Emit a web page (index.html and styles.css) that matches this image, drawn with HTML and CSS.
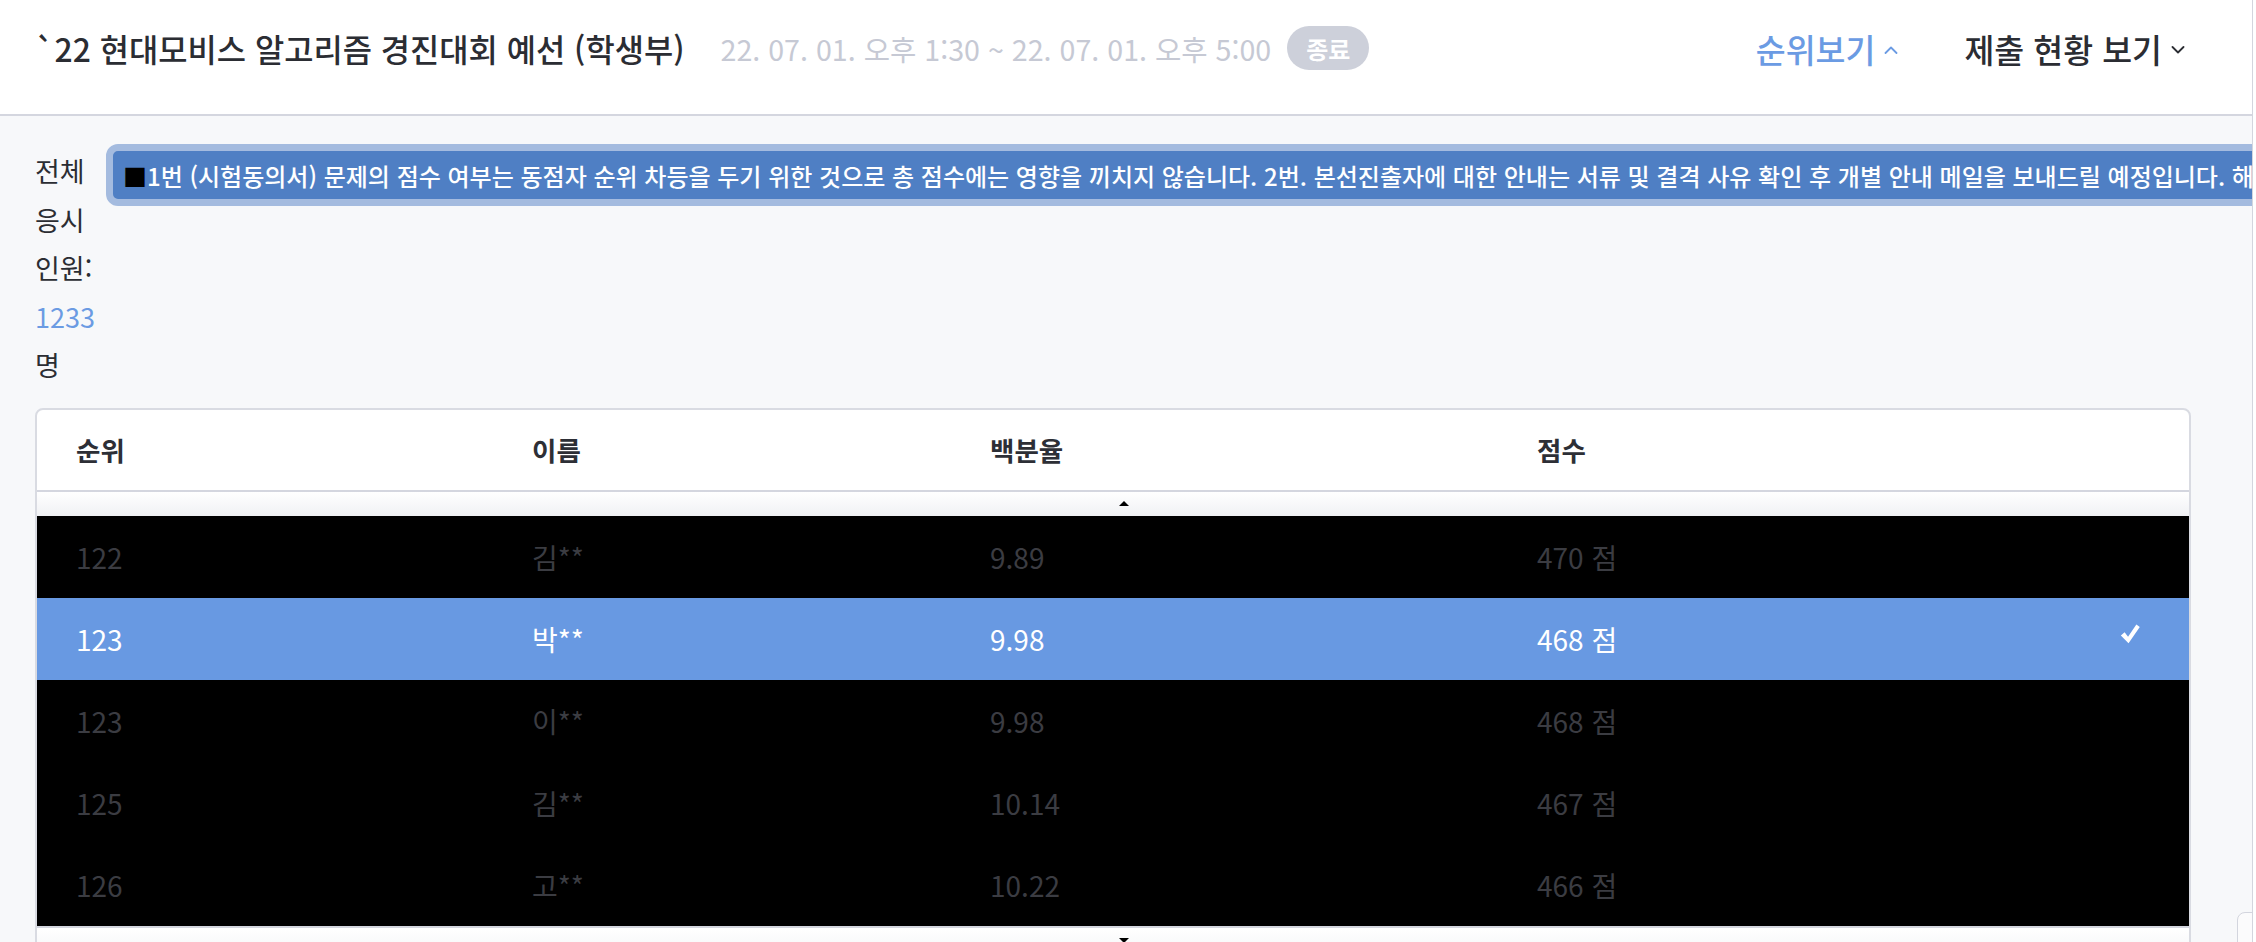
FILE: index.html
```html
<!DOCTYPE html>
<html lang="ko">
<head>
<meta charset="utf-8">
<title>순위보기</title>
<link rel="stylesheet" href="styles.css">
</head>
<body>
<div class="page">
  <header class="topbar">
    <div class="title-group">
      <h1 class="title">`22 현대모비스 알고리즘 경진대회 예선 (학생부)</h1>
      <span class="period">22. 07. 01. 오후 1:30 ~ 22. 07. 01. 오후 5:00</span>
      <span class="badge">종료</span>
    </div>
    <nav class="tabs">
      <a class="tab active" href="#">순위보기<svg class="chev" viewBox="0 0 14 8"><polyline points="1.5,7 7,1.5 12.5,7"/></svg></a>
      <a class="tab" href="#">제출 현황 보기<svg class="chev" viewBox="0 0 14 8"><polyline points="1.5,1 7,6.5 12.5,1"/></svg></a>
    </nav>
  </header>

  <main class="content">
    <div class="info-row">
      <p class="count">전체 응시 인원: <span class="num">1233</span> 명</p>
      <div class="notice"><span class="notice-text"><span class="sq">■</span>1번 (시험동의서) 문제의 점수 여부는 동점자 순위 차등을 두기 위한 것으로 총 점수에는 영향을 끼치지 않습니다. 2번. 본선진출자에 대한 안내는 서류 및 결격 사유 확인 후 개별 안내 메일을 보내드릴 예정입니다. 해당</span></div>
    </div>

    <section class="rank-card">
      <div class="rank-grid rank-head">
        <span>순위</span><span>이름</span><span>백분율</span><span>점수</span><span></span>
      </div>
      <div class="scroll-cue"><span class="tri-up"></span></div>
      <div class="rank-list">
        <div class="rank-grid rank-row"><span>122</span><span>김**</span><span>9.89</span><span>470 점</span><span></span></div>
        <div class="rank-grid rank-row selected"><span>123</span><span>박**</span><span>9.98</span><span>468 점</span><svg class="check" viewBox="0 0 18 18"><path d="M1.5 10.2 L4.6 7.6 L7.4 11.2 L14.2 1.2 L17 3.2 L7.8 16.6 Z"/></svg></div>
        <div class="rank-grid rank-row"><span>123</span><span>이**</span><span>9.98</span><span>468 점</span><span></span></div>
        <div class="rank-grid rank-row"><span>125</span><span>김**</span><span>10.14</span><span>467 점</span><span></span></div>
        <div class="rank-grid rank-row"><span>126</span><span>고**</span><span>10.22</span><span>466 점</span><span></span></div>
      </div>
      <div class="scroll-cue bottom"><span class="tri-down"></span></div>
    </section>
  </main>

  <div class="corner-widget"></div>
</div>
</body>
</html>
```

FILE: styles.css
```css
* { box-sizing: border-box; }

html, body {
  margin: 0;
  padding: 0;
  background: #ffffff;
}

body {
  font-family: "Noto Sans CJK KR", "Noto Sans", sans-serif;
  color: #2b2d33;
}

.page {
  position: relative;
  width: 2253px;
  height: 942px;
  background: #f7f8fa;
  border-right: 1px solid #d3d5de;
  overflow: hidden;
}

/* ---------- top bar ---------- */
.topbar {
  height: 116px;
  background: #ffffff;
  border-bottom: 2px solid #d4d6df;
  display: flex;
  justify-content: space-between;
  align-items: flex-start;
  padding: 23px 67px 0 35px;
}

.title-group {
  display: flex;
  align-items: center;
  height: 50px;
}

.title {
  margin: 0;
  font-size: 31.8px;
  font-weight: 500;
  line-height: 50px;
  color: #2b2d33;
  white-space: nowrap;
}

.period {
  margin-left: 36px;
  font-size: 28.6px;
  color: #c6c9d4;
  white-space: nowrap;
}

.badge {
  margin-left: 16px;
  height: 44px;
  padding: 0 19px;
  border-radius: 22px;
  background: #cdd0da;
  color: #ffffff;
  font-size: 24px;
  font-weight: 700;
  display: inline-flex;
  align-items: center;
}

.tabs {
  display: flex;
  align-items: center;
  gap: 66px;
  height: 50px;
}

.tab {
  display: flex;
  align-items: center;
  gap: 9px;
  font-size: 32.5px;
  font-weight: 500;
  color: #2b2d33;
  text-decoration: none;
  white-space: nowrap;
}

.tab.active { color: #6b9be3; }

.chev {
  width: 14px;
  height: 8px;
  fill: none;
  stroke: currentColor;
  stroke-width: 1.8;
  stroke-linecap: round;
  stroke-linejoin: round;
  margin-top: 4px;
}

/* ---------- content ---------- */
.content {
  padding: 28px 61px 0 35px;
}

.info-row {
  display: flex;
  align-items: flex-start;
  gap: 9px;
  margin-bottom: 18px;
}

.count {
  margin: 0;
  flex: none;
  width: 62px;
  padding-top: 3px;
  font-size: 27px;
  line-height: 48.5px;
  color: #2b2d33;
  word-break: keep-all;
}

.count .num { color: #6b9be3; }

.notice {
  flex: none;
  width: 2200px;
  height: 62px;
  border: 7px solid #a4bbdf;
  border-radius: 12px;
  background: #4f7fc4;
  display: flex;
  align-items: center;
  padding-left: 10px;
  overflow: hidden;
  white-space: nowrap;
}

.notice-text {
  font-size: 24px;
  font-weight: 500;
  color: #ffffff;
}

.notice-text .sq { color: #000000; }

/* ---------- ranking card ---------- */
.rank-card {
  background: #ffffff;
  border: 2px solid #d9dbe2;
  border-radius: 8px;
  overflow: hidden;
}

.rank-grid {
  display: grid;
  grid-template-columns: 456px 458px 547px 1fr auto;
  align-items: center;
  padding: 0 48px 0 39px;
}

.rank-head {
  height: 82px;
  font-size: 26.5px;
  font-weight: 600;
  color: #2d2f36;
  border-bottom: 2px solid #d4d6df;
}

.scroll-cue {
  height: 24px;
  display: flex;
  justify-content: center;
  align-items: center;
  padding-left: 22px;
  background: linear-gradient(#ffffff, #f0f1f4);
}

.scroll-cue.bottom {
  border-top: 2px solid #d4d6df;
  height: 40px;
  align-items: flex-start;
  padding-top: 10px;
}

.tri-up {
  width: 0;
  height: 0;
  border-left: 5px solid transparent;
  border-right: 5px solid transparent;
  border-bottom: 5px solid #000000;
}

.tri-down {
  width: 0;
  height: 0;
  border-left: 5px solid transparent;
  border-right: 5px solid transparent;
  border-top: 5px solid #000000;
}

.rank-list { background: #000000; }

.rank-row {
  height: 82px;
  font-size: 28px;
  color: #3b3c42;
}

.rank-row.selected {
  background: #6899e2;
  color: #ffffff;
}

.check {
  width: 22px;
  height: 22px;
  fill: #ffffff;
  margin-top: -10px;
}

/* ---------- floating corner element ---------- */
.corner-widget {
  position: absolute;
  left: 2237px;
  top: 912px;
  width: 40px;
  height: 60px;
  background: #fbfbfc;
  border: 1px solid #d3d5de;
  border-radius: 8px 0 0 0;
}
```
